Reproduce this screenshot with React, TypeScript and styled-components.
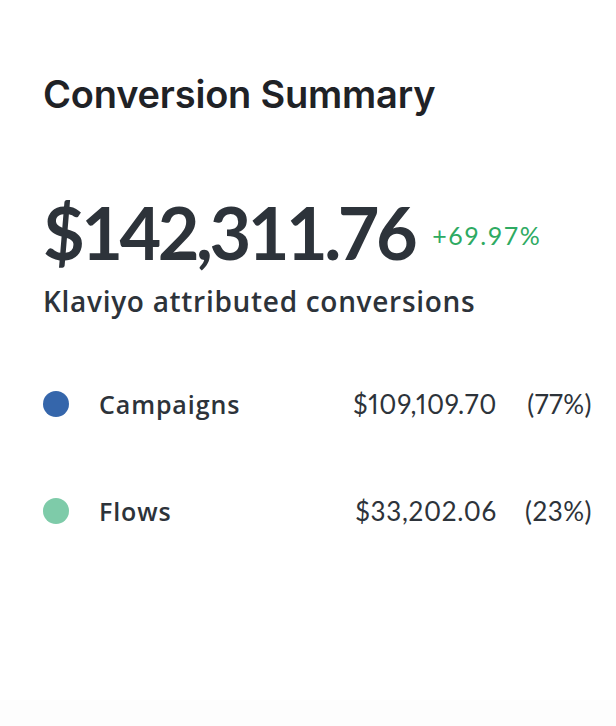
import * as React from 'react';
import styled, { createGlobalStyle } from 'styled-components';

const GlobalStyle = createGlobalStyle`
  html, body {
    margin: 0;
    padding: 0;
    background: #fdfdfd;
  }
  * {
    box-sizing: border-box;
  }
`

const Card = styled.div`
  display: flex;
  flex-direction: column;
  width: 616px;
  height: 700px;
  padding: 70px 24px 0 43px;
  background: #ffffff;
  box-shadow: 0 4px 14px rgba(0, 0, 0, 0.02);
  color: #2d333a;
  font-family: Lato, "Liberation Sans", sans-serif;
`

const Title = styled.h2`
  margin: 0;
  font-family: Inter, sans-serif;
  font-size: 38px;
  font-weight: 600;
  letter-spacing: -0.2px;
  line-height: 48px;
  color: #1f2226;
`

const TotalRow = styled.div`
  display: flex;
  align-items: center;
  gap: 18px;
  margin-top: 72px;
`

const TotalValue = styled.div`
  font-size: 72px;
  font-weight: 700;
  line-height: 84px;
  letter-spacing: -3.5px;
`

const Change = styled.div`
  font-size: 25px;
  font-weight: 400;
  letter-spacing: 1.5px;
  color: #2eaa62;
  padding-top: 6px;
`

const Subtitle = styled.div`
  font-family: "Open Sans", sans-serif;
  font-size: 28px;
  font-weight: 600;
  line-height: 36px;
  letter-spacing: 0.7px;
  margin-top: 9px;
`

const Legend = styled.div`
  display: flex;
  flex-direction: column;
  gap: 81px;
  margin-top: 68px;
`

const LegendRow = styled.div`
  display: grid;
  grid-template-columns: 26px 1fr auto 95px;
  align-items: center;
  height: 26px;
  font-size: 26px;
  font-variant-numeric: proportional-nums;
`

const Dot = styled.span<{ $color: string }>`
  width: 26px;
  height: 26px;
  border-radius: 50%;
  background: ${(p) => p.$color};
`

const Label = styled.span`
  padding-left: 30px;
  font-family: "Open Sans", sans-serif;
  font-size: 25px;
  font-weight: 600;
  letter-spacing: 0.9px;
`

const Amount = styled.span`
  font-weight: 400;
  text-align: right;
  letter-spacing: 0.7px;
`

const Share = styled.span`
  font-weight: 400;
  text-align: right;
  letter-spacing: 0.5px;
`

const rows = [
  { label: 'Campaigns', color: '#3566ab', amount: '$109,109.70', share: '(77%)' },
  { label: 'Flows', color: '#7ecba9', amount: '$33,202.06', share: '(23%)' },
]

const App = () => {
  return (
    <React.Fragment>
      <GlobalStyle />
      <Card>
        <Title>Conversion Summary</Title>
        <TotalRow>
          <TotalValue>$142,311.76</TotalValue>
          <Change>+69.97%</Change>
        </TotalRow>
        <Subtitle>Klaviyo attributed conversions</Subtitle>
        <Legend>
          {rows.map((row) => (
            <LegendRow key={row.label}>
              <Dot $color={row.color} />
              <Label>{row.label}</Label>
              <Amount>{row.amount}</Amount>
              <Share>{row.share}</Share>
            </LegendRow>
          ))}
        </Legend>
      </Card>
    </React.Fragment>
  );
};

export default App;
